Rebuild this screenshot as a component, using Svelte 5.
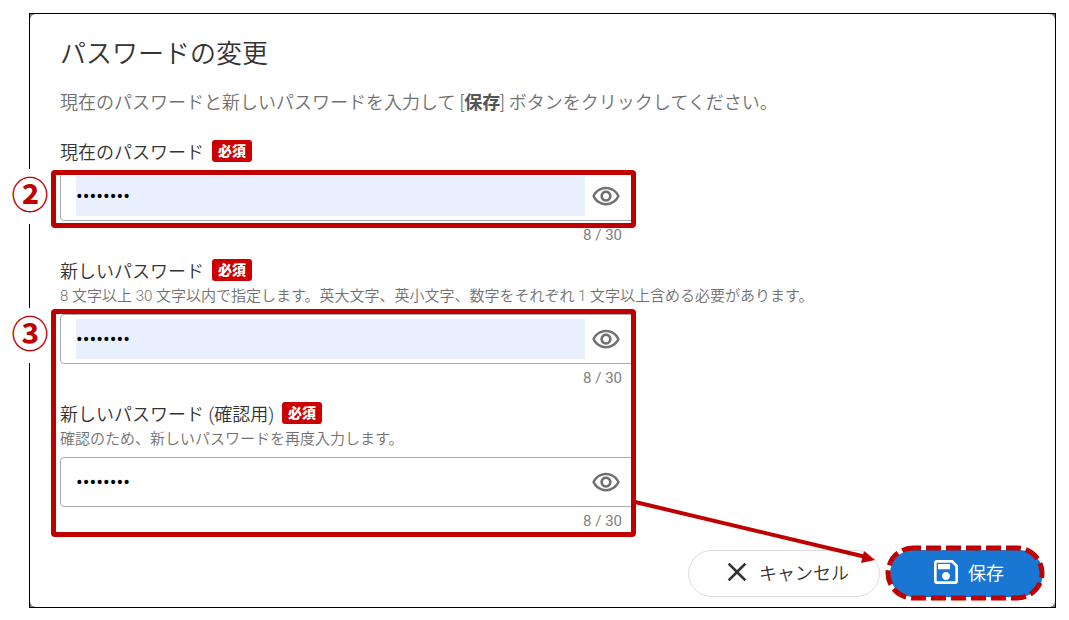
<script lang="ts">
  const maxLength = 30;

  let current = $state('password');
  let next = $state('password');
  let confirmation = $state('password');
  let visible = $state({ current: false, next: false, confirmation: false });
</script>

{#snippet eye()}
  <svg class="eye" viewBox="0 -0.5 24 24" aria-hidden="true">
    <path d="M12 6c3.79 0 7.17 2.13 8.82 5.5C19.17 14.87 15.79 17 12 17s-7.17-2.13-8.82-5.5C4.83 8.13 8.21 6 12 6m0-2C7 4 2.73 7.11 1 11.5 2.73 15.89 7 19 12 19s9.27-3.11 11-7.5C21.27 7.11 17 4 12 4zm0 5c1.38 0 2.5 1.12 2.5 2.5S13.38 14 12 14s-2.5-1.12-2.5-2.5S10.62 9 12 9m0-2c-2.48 0-4.5 2.02-4.5 4.5S9.52 16 12 16s4.5-2.02 4.5-4.5S14.48 7 12 7z" />
  </svg>
{/snippet}

<main class="frame">
  <div class="card">
    <h1>パスワードの変更</h1>
    <p class="lead">現在のパスワードと新しいパスワードを入力して [<b>保存</b>] ボタンをクリックしてください。</p>

    <form id="password-form" onsubmit={(e) => e.preventDefault()}>
      <div class="group">
        <div class="label-row">
          <label for="current">現在のパスワード</label>
          <span class="badge">必須</span>
        </div>
        <div class="field">
          <input id="current" class="filled" type={visible.current ? 'text' : 'password'} maxlength={maxLength} bind:value={current} />
          <button type="button" class="toggle" aria-label="パスワードを表示" onclick={() => visible.current = !visible.current}>
            {@render eye()}
          </button>
          <div class="mark mark-field"><span class="number">②</span></div>
        </div>
        <div class="counter">{current.length} / {maxLength}</div>
      </div>

      <div class="group">
        <div class="label-row">
          <label for="next">新しいパスワード</label>
          <span class="badge">必須</span>
        </div>
        <p class="hint">8 文字以上 30 文字以内で指定します。英大文字、英小文字、数字をそれぞれ 1 文字以上含める必要があります。</p>
        <div class="field">
          <input id="next" class="filled" type={visible.next ? 'text' : 'password'} maxlength={maxLength} bind:value={next} />
          <button type="button" class="toggle" aria-label="パスワードを表示" onclick={() => visible.next = !visible.next}>
            {@render eye()}
          </button>
        </div>
        <div class="counter">{next.length} / {maxLength}</div>
      </div>

      <div class="group">
        <div class="label-row">
          <label for="confirmation">新しいパスワード (確認用)</label>
          <span class="badge">必須</span>
        </div>
        <p class="hint">確認のため、新しいパスワードを再度入力します。</p>
        <div class="field">
          <input id="confirmation" type={visible.confirmation ? 'text' : 'password'} maxlength={maxLength} bind:value={confirmation} />
          <button type="button" class="toggle" aria-label="パスワードを表示" onclick={() => visible.confirmation = !visible.confirmation}>
            {@render eye()}
          </button>
        </div>
        <div class="counter">{confirmation.length} / {maxLength}</div>
      </div>

      <div class="mark mark-new"><span class="number">③</span></div>
    </form>

    <div class="actions">
      <button type="button" class="btn cancel">
        <svg class="icon" viewBox="0 0 24 24" aria-hidden="true">
          <path d="M19 6.41L17.59 5 12 10.59 6.41 5 5 6.41 10.59 12 5 17.59 6.41 19 12 13.41 17.59 19 19 17.59 13.41 12z" />
        </svg>
        キャンセル
      </button>
      <button type="submit" form="password-form" class="btn save">
        <svg class="icon" viewBox="0 0 24 24" aria-hidden="true">
          <path d="M17 3H5C3.89 3 3 3.9 3 5V19C3 20.1 3.89 21 5 21H19C20.1 21 21 20.1 21 19V7L17 3M19 19H5V5H16.17L19 7.83V19M12 12C10.34 12 9 13.34 9 15S10.34 18 12 18 15 16.66 15 15 13.66 12 12 12M6 6H15V10H6V6Z" />
        </svg>
        保存
        <svg class="dashes" viewBox="0 0 160 56" aria-hidden="true">
          <rect x="3" y="3" width="154" height="50" rx="25" />
        </svg>
      </button>
      <svg class="arrow" viewBox="0 0 242 68" aria-hidden="true">
        <path class="shaft" d="M1 4L232 59" />
        <path class="head" d="M241 62L227 65L230 53Z" />
      </svg>
    </div>
  </div>
</main>

<style>
  :global(body) {
    background: #fff;
  }

  .frame {
    margin: 13px 13px 12px 29px;
    border: 1px solid #000;
    background: #808080;
    font-family: Roboto, "Noto Sans CJK JP", sans-serif;
    font-size: 18px;
    font-weight: 350;
    color: #333;
  }

  .card {
    background: #fff;
    border-radius: 6px;
    padding: 22px 12px 10px 30px;
  }

  h1 {
    margin: 0 0 17px;
    font-size: 26px;
    font-weight: 350;
    line-height: 36px;
  }

  .lead {
    margin: 0 0 20px;
    line-height: 28px;
    color: #707070;
  }
  .lead b { font-weight: 700; color: #555; }

  form {
    position: relative;
    max-width: 576px;
    display: flex;
    flex-direction: column;
    gap: 7px;
  }

  .label-row {
    display: flex;
    align-items: center;
    gap: 8px;
    height: 28px;
  }

  .badge {
    background: #c00;
    color: #fff;
    border-radius: 3px;
    padding: 0 6px;
    font-size: 14px;
    font-weight: 900;
    line-height: 22px;
  }

  .hint {
    margin: 0;
    font-size: 15px;
    line-height: 24px;
    color: #707070;
    white-space: nowrap;
  }

  .field {
    position: relative;
    display: flex;
    align-items: center;
    gap: 6px;
    height: 50px;
    margin-top: 6px;
    padding: 0 14px 0 15px;
    box-sizing: border-box;
    border: 1px solid #aaa;
    border-radius: 4px;
  }

  input {
    flex: 1;
    min-width: 0;
    height: 40px;
    padding: 0;
    border: none;
    outline: none;
    background: transparent;
    font-family: Roboto, "Noto Sans CJK JP", sans-serif;
    font-size: 20px;
    color: #000;
  }
  input.filled { background: #e8f0fe; }

  .toggle {
    display: flex;
    padding: 0;
    border: none;
    background: none;
    cursor: pointer;
  }

  .eye { width: 30px; height: 30px; fill: #707070; }

  .counter {
    padding-right: 14px;
    text-align: right;
    font-size: 15px;
    font-weight: 400;
    line-height: 28px;
    color: #808080;
  }

  /* red callouts drawn over the form */
  .mark {
    position: absolute;
    border: 5px solid #c00000;
    border-radius: 4px;
    pointer-events: none;
  }
  .mark-field { inset: -2px -1px -8px -10px; }
  .mark-new { inset: 172px 0 -2px -9px; }

  .number {
    position: absolute;
    top: -6px;
    left: -45px;
    width: 38px;
    background: #fff;
    color: #c00000;
    font-size: 37px;
    font-weight: 700;
    line-height: 55px;
    text-align: center;
  }

  .actions {
    position: relative;
    display: flex;
    justify-content: flex-end;
    gap: 10px;
    margin-top: 15px;
  }

  .btn {
    display: flex;
    align-items: center;
    gap: 6px;
    height: 47px;
    border-radius: 24px;
    font-family: inherit;
    font-size: 18px;
    cursor: pointer;
  }

  .icon { width: 32px; height: 32px; fill: currentColor; }

  .cancel {
    padding: 0 30px 3px 32px;
    background: #fff;
    border: 1px solid #ddd;
    color: #333;
    font-weight: 350;
  }

  .save {
    position: relative;
    padding: 0 39px 3px 40px;
    background: #1976d2;
    border: none;
    color: #fff;
    font-weight: 400;
  }

  .dashes {
    position: absolute;
    top: -5px;
    left: -5px;
    width: 160px;
    height: 56px;
    fill: none;
    stroke: #c00000;
    stroke-width: 5;
    stroke-dasharray: 15 5;
    stroke-dashoffset: 7;
  }

  .arrow {
    position: absolute;
    top: -52px;
    right: 167px;
    width: 242px;
    height: 68px;
    pointer-events: none;
  }
  .shaft { fill: none; stroke: #c00000; stroke-width: 4; }
  .head { fill: #c00000; }
</style>
